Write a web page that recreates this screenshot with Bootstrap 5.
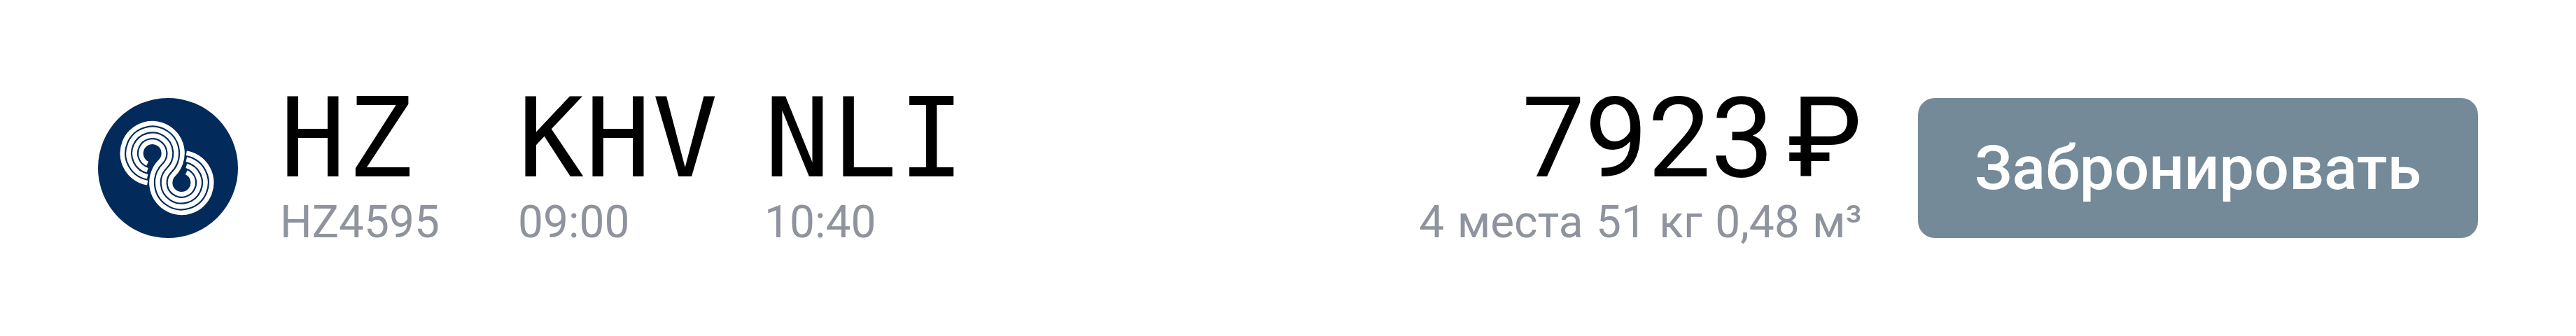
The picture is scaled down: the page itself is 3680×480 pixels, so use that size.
<!DOCTYPE html>
<html lang="ru">
<head>
  <meta charset="UTF-8">
  <meta name="viewport" content="width=device-width, initial-scale=1">
  <title>Бронирование</title>
  <link href="https://cdn.jsdelivr.net/npm/bootstrap@5.3.3/dist/css/bootstrap.min.css" rel="stylesheet">
  <style>
    body { background: #fff; font-family: Roboto, "Liberation Sans", sans-serif; }
    .offer-row { padding: 140px; height: 480px; }
    .carrier-logo { width: 200px; height: 200px; flex: none; }
    .leg-first { width: 340px; margin-left: 60px; }
    .leg-second { width: 352px; }
    .leg-code { font-family: "DejaVu Sans Mono", monospace; font-size: 156px; letter-spacing: 2px; line-height: 116px; color: #000; white-space: pre; }
    .offer-sub { font-size: 64px; line-height: 64px; color: #8e939d; white-space: nowrap; margin-top: 30px; word-spacing: 2.5px; }
    .offer-price { font-size: 160px; line-height: 116px; color: #000; }
    .price-sign { margin-left: 20px; }
    .offer-book { width: 800px; height: 200px; margin-left: 80px; background: #748a98; border: 0; border-radius: 24px; color: #fff; font-size: 88px; font-weight: 500; line-height: 1; padding: 0; }
  </style>
</head>
<body>

<div class="offer-row d-flex align-items-start">
  <svg class="carrier-logo" viewBox="60 60 600 600" role="img" aria-label="HZ">
    <circle cx="360" cy="360" r="300" fill="#022b5b"/>
    <g fill="none" stroke="#fff" stroke-width="20">
      <path d="M272 423.8A128.5 128.5 0 1 1 383.5 388.2A49 49 0 1 0 439 378.7"/>
      <path d="M272 396.8A102 102 0 1 1 364.8 369.4A75.5 75.5 0 1 0 439 350.5"/>
      <path d="M272 369.5A75.5 75.5 0 1 1 346.2 350.6A102 102 0 1 0 439 323.2"/>
      <path d="M272 341.3A49 49 0 1 1 327.5 331.8A128.5 128.5 0 1 0 439 296.2"/>
    </g>
  </svg>

  <div class="leg-first">
    <div class="leg-code">HZ</div>
    <div class="offer-sub">HZ4595</div>
  </div>
  <div class="leg-second">
    <div class="leg-code">KHV</div>
    <div class="offer-sub">09:00</div>
  </div>
  <div>
    <div class="leg-code">NLI</div>
    <div class="offer-sub">10:40</div>
  </div>

  <div class="ms-auto text-end">
    <div class="offer-price">7923<span class="price-sign">₽</span></div>
    <div class="offer-sub">4 места 51 кг 0,48 м³</div>
  </div>
  <button type="button" class="btn offer-book">Забронировать</button>
</div>

<script src="https://cdn.jsdelivr.net/npm/bootstrap@5.3.3/dist/js/bootstrap.bundle.min.js"></script>
</body>
</html>
